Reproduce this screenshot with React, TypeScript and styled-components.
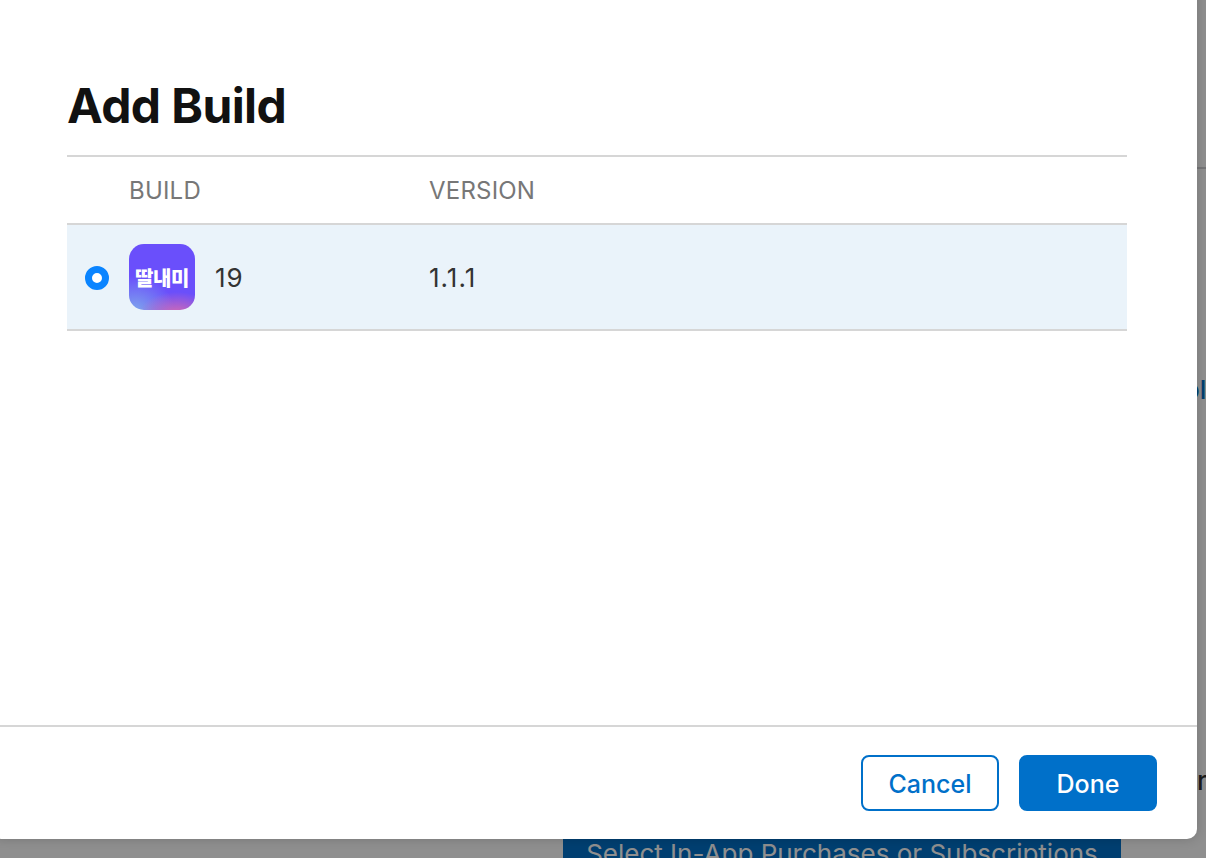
import React from "react";
import styled, { createGlobalStyle } from "styled-components";

const Global = createGlobalStyle`
  html, body { margin: 0; padding: 0; height: 100%; background: #fff; }
  body { font-family: Inter, "Liberation Sans", "Noto Sans CJK KR", sans-serif; overflow: hidden; }
  #root { height: 100%; }
`;

const Page = styled.div`
  position: relative;
  width: 1206px;
  height: 858px;
  overflow: hidden;
  background: #fff;
`;

const BehindContent = styled.div`
  display: flex;
  flex-direction: column;
  height: 100%;
  box-sizing: border-box;
  padding-top: 167px;
`;

const BehindRule = styled.div`
  height: 2px;
  background: #d2d2d7;
`;

const BehindLine = styled.div<{ $top: number; $color: string; $left: number }>`
  margin-top: ${(p) => p.$top}px;
  padding-left: ${(p) => p.$left}px;
  font-size: 26px;
  font-weight: 500;
  line-height: 30px;
  white-space: nowrap;
  color: ${(p) => p.$color};
`;

const BehindButton = styled.div`
  margin: auto 85px 0 563px;
  height: 19px;
  background: #0070c9;
  color: #fff;
  overflow: hidden;
  font-size: 26px;
  line-height: 30px;
  text-align: center;
  white-space: nowrap;
`;

const Scrim = styled.div`
  position: absolute;
  inset: 0;
  background: rgba(0, 0, 0, 0.44);
`;

const Modal = styled.div`
  position: absolute;
  left: -8px;
  top: -20px;
  width: 1205px;
  height: 859px;
  box-sizing: border-box;
  display: flex;
  flex-direction: column;
  background: #fff;
  border-radius: 10px;
  box-shadow: 0 0 12px rgba(0, 0, 0, 0.18);
`;

const Body = styled.div`
  flex: 1;
  padding: 95px 70px 0 75px;
`;

const Title = styled.h1`
  margin: 0;
  height: 80px;
  font-size: 48px;
  line-height: 61px;
  font-weight: 700;
  letter-spacing: -0.6px;
  color: #111;
`;

const Table = styled.div`
  border-top: 2px solid #d6d6d6;
`;

const Row = styled.div<{ $selected?: boolean; $height: number }>`
  display: grid;
  grid-template-columns: 62px 300px 1fr;
  align-items: center;
  height: ${(p) => p.$height}px;
  border-bottom: 2px solid #d6d6d6;
  background: ${(p) => (p.$selected ? "#eaf3fa" : "transparent")};
`;

const HeaderCell = styled.div`
  font-size: 24px;
  line-height: 28px;
  letter-spacing: 0.2px;
  padding-top: 1px;
  color: #777;
`;

const RadioCell = styled.div`
  padding: 1px 0 0 18px;
`;

const Radio = styled.span`
  display: block;
  width: 10px;
  height: 10px;
  border: 7px solid #0a84ff;
  border-radius: 50%;
  background: #fff;
`;

const BuildCell = styled.div`
  display: flex;
  align-items: center;
  gap: 20px;
`;

const AppIcon = styled.div`
  width: 66px;
  height: 66px;
  border-radius: 15px;
  display: flex;
  align-items: center;
  justify-content: center;
  color: #fff;
  font-family: "Noto Sans CJK KR", sans-serif;
  font-size: 20px;
  font-weight: 900;
  letter-spacing: -0.4px;
  background:
    radial-gradient(ellipse 38px 22px at 48px 70px, #d56bb2 0%, rgba(213, 107, 178, 0) 100%),
    radial-gradient(ellipse 40px 36px at 6px 68px, #7fa8ec 0%, rgba(127, 168, 236, 0) 100%),
    #6a4ffb;
`;

const CellText = styled.span`
  padding-top: 1px;
  font-size: 26px;
  line-height: 30px;
  letter-spacing: 1px;
  color: #333;
`;

const Footer = styled.div`
  display: flex;
  justify-content: flex-end;
  gap: 20px;
  height: 114px;
  box-sizing: border-box;
  padding: 28px 40px 0 0;
  border-top: 2px solid #d6d6d6;
`;

const Button = styled.button<{ $primary?: boolean }>`
  width: 138px;
  height: 56px;
  box-sizing: border-box;
  border-radius: 8px;
  border: 2px solid #0070c9;
  background: ${(p) => (p.$primary ? "#0070c9" : "#fff")};
  color: ${(p) => (p.$primary ? "#fff" : "#0070c9")};
  font-family: inherit;
  font-size: 25px;
  font-weight: 500;
  padding: 2px 0 0;
`;

export default function App() {
  return (
    <Page>
      <Global />
      <BehindContent>
        <BehindRule />
        <BehindLine $top={206} $color="#0070c9" $left={1184}>ol</BehindLine>
        <BehindLine $top={361} $color="#333" $left={1197}>r</BehindLine>
        <BehindButton>Select In-App Purchases or Subscriptions</BehindButton>
      </BehindContent>
      <Scrim />
      <Modal>
        <Body>
          <Title>Add Build</Title>
          <Table>
            <Row $height={66}>
              <span />
              <HeaderCell>BUILD</HeaderCell>
              <HeaderCell>VERSION</HeaderCell>
            </Row>
            <Row $selected $height={104}>
              <RadioCell>
                <Radio />
              </RadioCell>
              <BuildCell>
                <AppIcon>딸내미</AppIcon>
                <CellText>19</CellText>
              </BuildCell>
              <CellText>1.1.1</CellText>
            </Row>
          </Table>
        </Body>
        <Footer>
          <Button>Cancel</Button>
          <Button $primary>Done</Button>
        </Footer>
      </Modal>
    </Page>
  );
}
